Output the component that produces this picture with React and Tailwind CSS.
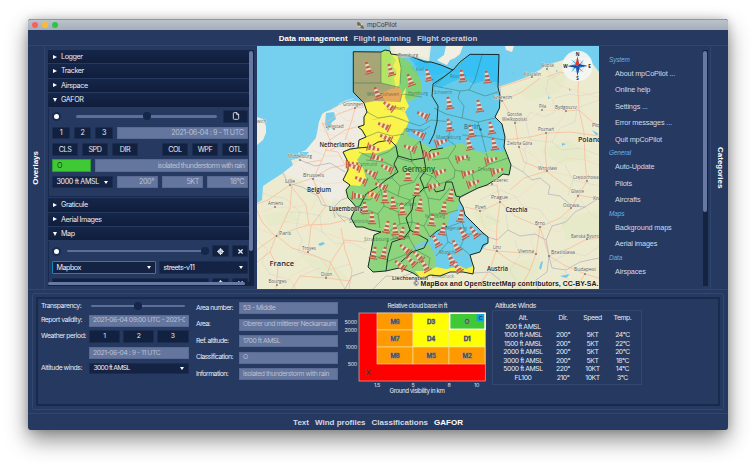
import React from "react";
import { File, LocateFixed } from "lucide-react";
import { FaTimes } from "react-icons/fa";

const Button = ({ className = "", children }) => (
  <div className={"flex h-full shrink-0 items-center justify-center rounded-[1px] border border-[#1b2c51] bg-[#12213f] text-[#e6eaf2] " + className}>{children}</div>
);

const Field = ({ className = "", children }) => (
  <div className={"flex h-full min-w-0 items-center overflow-hidden whitespace-nowrap border border-[#596b95] bg-[#64759e] text-[#b8c0d2] " + className}>{children}</div>
);

const Select = ({ className = "", children }) => (
  <div className={"flex h-full shrink-0 items-center justify-between rounded-[1px] border bg-[#142344] pl-[3.5px] pr-[4px] text-[#eef1f7] " + className}>
    <span>{children}</span>
    <span className="h-0 w-0 border-x-[2.5px] border-t-[3px] border-x-transparent border-t-white" />
  </div>
);

const Slider = ({ className = "", end = false }) => (
  <div className={"relative flex shrink-0 items-center " + className}>
    <div className="h-[2.4px] w-full rounded-full bg-[#5c6f9a]" />
    <div className={"absolute h-[8px] w-[8px] rounded-full bg-[#14264a] " + (end ? "-right-[4px]" : "left-[calc(50%-4px)]")} />
  </div>
);

const Radio = () => (
  <div className="flex h-[9px] w-[9px] shrink-0 items-center justify-center rounded-full bg-[#182b52]">
    <div className="h-[5px] w-[5px] rounded-full bg-white" />
  </div>
);

const Section = ({ open, children }) => (
  <div className="mb-px flex h-[13.4px] shrink-0 items-center bg-gradient-to-b from-[#15264a] to-[#101e3c] pl-[5px] text-[#e8ecf4]">
    <span className="flex w-[8px] items-center">
      {open ? (
        <span className="h-0 w-0 border-x-[2.5px] border-t-[4px] border-x-transparent border-t-white" />
      ) : (
        <span className="h-0 w-0 border-y-[2.5px] border-l-[4px] border-y-transparent border-l-white" />
      )}
    </span>
    {children}
  </div>
);

const Row = ({ className = "", children }) => <div className={"flex h-[12.6px] shrink-0 items-center " + className}>{children}</div>;

function Overlays() {
  return (
    <div className="flex w-[213px] shrink-0 border-l border-[#31466f] pl-[3px] pt-[4px] text-[7.2px] leading-none tracking-[-0.42px]">
      <div className="flex h-[236px] w-[201px] flex-col">
        <div className="flex h-[232px] flex-col overflow-hidden">
          <Section>Logger</Section>
          <Section>Tracker</Section>
          <Section>Airspace</Section>
          <Section open>GAFOR</Section>
          <div className="mb-px flex h-[89.6px] shrink-0 flex-col gap-[3.8px] border-b border-l border-[#182a50] pl-[3px] pr-px pt-[2.6px]">
            <Row>
              <Radio />
              <Slider className="ml-[15px] h-full w-[141px]" />
              <Button className="ml-[6px] w-[25px]"><File size={8} strokeWidth={2.6} /></Button>
            </Row>
            <Row className="gap-[4px]">
              <Button className="w-[18px]">1</Button>
              <Button className="w-[17px]">2</Button>
              <Button className="w-[18px]">3</Button>
              <Field className="flex-1 justify-end pr-[3.5px]">2021-06-04 : 9 - 11 UTC</Field>
            </Row>
            <Row className="gap-[4px]">
              <Button className="w-[26px]">CLS</Button>
              <Button className="w-[26px]">SPD</Button>
              <Button className="w-[26px]">DIR</Button>
              <Button className="ml-auto w-[26px]">COL</Button>
              <Button className="w-[26px]">WPF</Button>
              <Button className="w-[26px]">OTL</Button>
            </Row>
            <Row className="gap-[4px]">
              <div className="flex h-full w-[39px] items-center border border-[#2f9c38] bg-[#3fca35] pl-[4px] text-[#153a20]">O</div>
              <Field className="flex-1 justify-end pr-[2.5px] tracking-[-0.6px]">isolated thunderstorm with rain</Field>
            </Row>
            <Row className="gap-[4px]">
              <Select className="w-[61px] border-[#1b2c51] tracking-[-0.38px]">3000 ft AMSL</Select>
              <Field className="flex-1 justify-end pr-[3px]">200°</Field>
              <Field className="flex-1 justify-end pr-[3px]">5KT</Field>
              <Field className="flex-1 justify-end pr-[3px]">18°C</Field>
            </Row>
          </div>
          <Section>Graticule</Section>
          <Section>Aerial Images</Section>
          <Section open>Map</Section>
          <div className="flex flex-col gap-[3.8px] border-l border-[#182a50] pl-[3px] pr-px pt-[3.4px]">
            <Row>
              <Radio />
              <Slider end className="ml-[6px] h-full w-[138px]" />
              <Button className="ml-auto w-[17px]"><LocateFixed size={7} strokeWidth={3.6} /></Button>
              <Button className="ml-[3px] w-[16px]"><FaTimes size={7} /></Button>
            </Row>
            <Row className="gap-[3px]">
              <Select className="w-[104px] border-[#1587b5] tracking-[-0.5px]">Mapbox</Select>
              <Select className="w-[89px] border-[#1b2c51] tracking-[-0.5px]">streets-v11</Select>
            </Row>
            <Row className="gap-[3px]">
              <Button className="w-[157px]" />
              <Button className="w-[17px]"><LocateFixed size={7} strokeWidth={3.6} /></Button>
              <Button className="w-[16px]"><FaTimes size={7} /></Button>
            </Row>
          </div>
        </div>
        <div className="h-[3.6px] bg-[#14233f]">
          <div className="h-[3.2px] w-[197px] rounded-full bg-[#6779a3]" />
        </div>
      </div>
      <div className="h-[236px] w-[4.5px] bg-[#14233f]">
        <div className="mt-px h-[200px] w-[3.6px] rounded-full bg-[#6779a3]" />
      </div>
    </div>
  );
}

const SOCKS = [
  [368, 68, -16], [390.5, 70, -16], [410, 80, -20], [428, 75, -14], [377, 93, -20], [389, 106, -55], [423, 115, -65], [384, 126, -65], [386, 138, -65], [419, 134, -65],
  [373, 148, 105], [410, 148, -70], [377, 158, 110], [352, 164, 90], [429, 155, 100],
  [462, 76, -8], [487, 77, -8], [449, 103, -10], [479, 106, -10], [449, 125, -10], [471, 131, -10], [491, 128, -10], [441, 142, 72], [469, 144, -12], [494, 144, -10],
  [433, 155, 75], [462, 158, 75], [491, 160, 75], [355, 167, -70], [371, 173, -65], [387, 168, -65], [361, 180, -65], [381, 186, -65], [408, 175, 0], [358, 196, 95],
  [373, 195, -65], [385, 197, 0], [417, 190, 6], [393, 203, -5], [365, 208, -5], [402, 209, -5], [420, 205, 8], [372, 218, 0], [387, 227, 10], [395, 229, -5],
  [417, 229, 8], [402, 233, 12], [374, 253, 12], [384, 253, 12], [405, 249, -50], [418, 256, -45], [400, 265, -50], [411, 261, -45], [425, 266, -30],
  [440, 172, 72], [434, 186, 75], [468, 173, 75], [497, 171, 75], [473, 183, 72], [451, 195, 10], [444, 208, 8], [432, 220, 5], [461, 216, 8], [443, 229, 10],
  [463, 233, -30], [474, 232, -35], [436, 241, -30], [456, 246, -28], [451, 259, -25], [457, 267, -35],
];

const CITIES = [
  ["wich", 257, 123, 9], ["Groningen", 343, 105.5, 20], ["Lelystad", 325.5, 127.5, 18], ["Middelburg", 288, 157.5, 24], ["Brussels", 303, 176.5, 21], ["Lille", 285, 183, 10],
  ["Amiens", 268, 204.5, 15], ["Paris", 279, 234.5, 12], ["Troyes", 302, 249.5, 14], ["Dijon", 321, 276, 11], ["Bourges", 268.5, 283, 18], ["Słupsk", 541, 67, 13],
  ["Koszalin", 524, 75.5, 17], ["Szczecin", 493, 99, 19], ["Gorzów", 507, 115.5, 15], ["Wielkopolski", 502, 121, 25], ["Piła", 539, 108, 7], ["Bydgoszcz", 555, 109, 22],
  ["Poznań", 538, 130.5, 16], ["Zielona Góra", 507, 145, 25], ["Płock", 592, 126.5, 13], ["Wrocław", 538, 169.5, 19], ["Częstochowa", 573, 178.5, 25.5], ["Gliwice", 571, 193, 13],
  ["Prague", 491, 199, 17], ["Plzeň", 475, 209, 11], ["Ostrava", 563, 206.5, 16], ["Kraków", 593, 199.5, 17], ["Liberec", 493, 182, 15], ["Brno", 535, 224.5, 10],
  ["Linz", 493, 248.5, 8], ["Vienna", 518, 252.5, 16], ["Bratislava", 551, 254, 24], ["Banská Bystrica", 571, 237.5, 31], ["Budapest", 574, 271, 22], ["Flensburg", 398, 57, 20],
];

const GHOSTS = [
  ["Wilhelmshaven", 367, 96, 32], ["Bremen", 387, 110, 18], ["Hamburg", 408, 95, 20], ["Kiel", 416, 71, 8], ["Rostock", 450, 78, 16], ["Schwerin", 434, 93.5, 18],
  ["Hannover", 404, 131.5, 19], ["Magdeburg", 436, 138.5, 25], ["Leipzig", 455, 159.5, 15], ["Dresden", 478, 170.5, 17], ["Frankfurt", 394, 205.5, 22], ["Dortmund", 357, 165.5, 20],
  ["Saarbrücken", 349, 223, 24], ["Strasbourg", 364, 241, 25], ["Nuremberg", 425, 217.5, 20], ["Regensburg", 445, 229.5, 22], ["Munich", 439, 253.5, 16], ["Innsbruck", 432, 277.5, 22], ["Stuttgart", 392, 239, 18],
];

const DOTS = [[355, 108], [334, 129], [300, 160], [313, 179], [290, 185], [275, 207], [276.5, 236], [308, 252], [326, 278], [277, 285], [547, 69], [532, 77], [502, 101], [515, 123], [542, 110], [566, 111], [546, 133], [519, 147], [547, 171], [587, 181], [578, 196], [500, 202], [480, 211], [571, 208], [540, 227], [497, 251], [536, 254], [549, 256], [587, 239], [585, 274], [492, 184]];

const GERMANY = "M353.3 51.7L381 52L385 50L390 51L391 54L398 55L407 55L415 58L425 62L431 62L441 65L453 70L460 62L470 54.3L499 54.5L498 87L500 96L499.5 108L495 117L502 124L505 137L504 147L508 157L511 165L509 175L503 174L498 178L487 185L478 188L470 192L460 197L459 200L463 207L465 215L475 225L483 233L488 237L488 243L483 245L480 252L470 255L472 262L474 268L473 274L463 272L450 272L440 276L430 275L422 279L413 273L406 270L399 268L386 271L373 272L368 267L371 252L374 235L381 232L371 230L363 227L356 227L351 218L356 207L352 202L348 198L346 190L350 185L343 180L348 170L348 162L343 152L350 149L358 148L359 140L366 137L362 130L358 127L364 125L364 117L367 112L364 103L356 95L353.3 92Z";

function Compass() {
  return (
    <g transform="translate(577.5 66)">
      <circle r="15.2" fill="#f4f6f5" opacity="0.92" />
      <circle r="6" fill="none" stroke="#9db9d6" strokeWidth="0.5" />
      <g fill="#2fb4de">
        <path d="M0 0L-6.5 -6.5L-1 -3ZM0 0L6.5 -6.5L3 -1Z" />
        <path d="M0 0L6.5 6.5L1 3ZM0 0L-6.5 6.5L-3 1Z" />
      </g>
      <path d="M0 -10L1.8 -1.8L0 0L-1.8 -1.8Z" fill="#e23327" />
      <path d="M0 10L-1.8 1.8L0 0L1.8 1.8ZM10 0L1.8 1.8L0 0L1.8 -1.8ZM-10 0L-1.8 -1.8L0 0L-1.8 1.8Z" fill="#2e63c2" />
      <path d="M0 10L1.8 1.8L0 0ZM10 0L1.8 -1.8L0 0ZM-10 0L-1.8 1.8L0 0Z" fill="#1d4596" />
      <g fontSize="4.6" fontWeight="700" textAnchor="middle" fill="#222">
        <text y="-10.4">N</text><text y="14">S</text><text x="12" y="1.7">E</text><text x="-12" y="1.7">W</text>
      </g>
    </g>
  );
}

function MapView() {
  return (
    <svg className="block h-[243px] w-[342px] shrink-0 self-start font-['Open_Sans',sans-serif]" viewBox="257 46 342 243">
      <rect x="257" y="46" width="342" height="243" fill="#75cfef" />
      <path d="M257 117L263 119L266 126L266 133L263 140L257 145Z" fill="#f0ede2" />
      <path d="M257 203L262 200L263 186L272 180L283 173L293 165L291 160L300 158L298 153L306 150L311 144L316 138L318 131L319 122L322 114L325 112L329 117L332 109L339 105L346 102L353 101L363 102L375 92L391 88L392 70L390 46L431 46L429 62L455 72L480 80L498 87L513 82L530 76L547 65L563 60L572 57L588 58L599 72V289H257Z" fill="#edebcf" />
      <path d="M300 160L306 150L316 138L319 122L325 112L353 101L364 103L360 150L345 160L345 190L340 205L320 196L300 180L283 173Z" fill="#efece3" />
      <path d="M437 60L444 55L446 46H463L460 54L455 58L450 60L447 65L440 62ZM505 46L514 46L512 52L506 50ZM393 46H430L428 58L415 55L408 58L397 54Z" fill="#f1eee2" />
      <path d="M326 113L334 112L336 119L332 122L328 131L325 124ZM300 152L309 152L306 156L299 156ZM410 68L420 60L440 66L450 72L430 76L418 76Z" fill="#75cfef" />
      <path d="M338 104L346 100L354 98L353 99.5L344 102L339 105Z" fill="#b9deea" />
      <g fill="#dfe9c4" opacity="0.5">
        <path d="M515 90L545 76L570 70L560 92L530 100ZM480 205L500 222L485 228L472 214ZM540 150L570 140L590 158L560 164ZM300 255L330 262L350 280L320 276ZM500 265L540 258L536 289H480ZM560 218L599 210V236L566 240ZM262 215L290 210L300 220L270 226ZM334 198L350 206L347 220L330 214Z" />
      </g>
      <g fill="none" stroke="#f9b996" strokeWidth="0.75">
        <path d="M275 236L262 222L257 210M276 236L270 252L278 268L276 289M277 236L298 228L309 225L330 224L350 219M277 236L290 208L292 185L313 178L330 168L345 165M277 236L292 248L308 253L330 262L345 289M309 225L306 205L290 185L268 200L257 204M276 236L262 246L257 250M308 253L311 226L326 206L313 179L322 160L330 140L322 122M330 140L345 130L360 126M330 150L350 142M322 160L305 163M322 125L338 114L355 108L364 107M355 108L352 120L345 140M345 165L338 152L325 150M326 278L331 262L345 240L366 242M257 262L270 252M292 289L300 276L326 278L350 281M341 228L345 250L352 270L349 289" />
        <path d="M502 100L515 123L519 147L524 162L546 171L578 195L599 199M505 140L530 137L547 133L570 132L599 136M547 133L545 150L547 171M581 60L578 90L579 110L584 132L585 160L587 181L578 196L571 208L560 218L540 227L549 256M547 77L560 72L577 76M500 202L482 211L465 207M500 202L497 185L485 186M500 202L515 216L540 227L536 254L510 252L496 251L480 248M500 202L497 225L496 251L490 270L476 289M536 254L530 270L520 289M549 256L566 266L585 274L599 278M549 256L570 248L585 240L599 238M502 101L522 92L540 78M498 88L510 84L532 77M547 171L524 178L510 190M566 111L579 110L599 128M585 274L575 289M496 251L512 262L530 270" />
      </g>
      <g fill="none" stroke="#f7cdb2" strokeWidth="0.4">
        <path d="M257 228L276 236L284 222L309 225L322 232L345 240M262 212L275 207L290 208L306 205M270 262L292 264L308 252M300 166L313 179L318 196L311 210M313 179L326 184L345 182M320 130L334 136L345 133L352 146M312 150L326 156L340 156M332 106L345 120L355 122M282 289L291 276L311 266M515 123L530 120L542 110L566 111M519 147L534 156L547 171L566 175L587 181M547 133L560 122L566 111M500 202L520 196L534 184L547 171M480 211L484 228L497 232M540 227L560 232L571 208M536 254L530 240L540 227M578 196L590 214L599 218M566 266L562 280M502 270L486 276M599 165L585 160L566 158L547 171M599 98L580 92L560 86L547 69" />
      </g>
      <g fill="none" stroke="#b9b4bf" strokeWidth="0.8">
        <path d="M283 173L288 183L302 187L318 196L322 205L333 207L338 215L351 219M300 160L315 166L330 163L345 172M338 215L345 222M335 218L333 208L341 200L347 198M511 165L523 172L532 180L540 178L550 186L548 194L560 196L572 206L585 207L599 198M460 198L470 192M488 237L497 240L508 230L520 236L535 234L546 240L552 226L566 222L575 212L585 207M546 240L549 256L552 268L566 270L580 262L599 258M549 256L547 272L536 280L538 289M500 87L501 101M413 273L400 277L386 276L373 289M474 273L490 272L500 280M364 272L352 276L345 289" />
      </g>
      <g fill="none" stroke="#c9c4c6" strokeWidth="0.5" strokeDasharray="1.5 0.7">
        <path d="M257 190L270 196L285 198L300 212L296 228L302 240L298 252L320 258L330 270L350 264M257 240L268 250L262 262L270 274M320 216L322 232L336 244L350 242L366 250M290 212L300 212L322 216M300 276L320 268M270 274L290 280L296 289M523 172L527 160L524 150L530 140L526 120L530 112L545 117L555 112L553 100L546 92L548 80L560 74M530 140L552 142L560 128L575 122L577 108L599 100M555 98L570 94L580 96L599 92M552 142L562 150L580 148L599 155M565 165L573 180L568 196M573 180L599 186M480 200L500 190L515 196L523 206L540 210L552 226M500 222L486 216M508 230L506 214M515 240L520 256L510 270L520 289M552 262L570 252L585 256L599 246M566 270L570 289" />
      </g>
      <g fill="#72c7ec">
        <path d="M318 244L323 242L325 244L320 246ZM541 262L543 261L541 270L539 268ZM562 143L566 144L562 146ZM440 62L441 64L439 64ZM592 130L599 134L596 135ZM548 96L550 98L548 99ZM512 72L515 73L513 75ZM556 70L558 71L556 72ZM569 88L571 90L569 91Z" />
        <path d="M560 276L570 274L574 270L566 278Z" />
      </g>
      <g opacity="0.92">
        <path d={GERMANY} fill="#84d377" />
        <path d="M353.3 51.7H381V83L400 87V102L375 101L367 112L364 103L353.3 92Z" fill="#aba36c" />
        <path d="M391 89L400 88L402 94L400 102L385 101L381 94Z" fill="#e7a352" />
        <path d="M381 52L385 50L390 51L391 54L398 55L400 82L398 87L381 83Z" fill="#b9e85a" />
        <path d="M391 54L398 55L401 68L400 84L396 88L394 78L397 72L393 66L396 60Z" fill="#f2f04b" />
        <path d="M398 55L407 55L415 58L431 62L453 70L470 54.3L499 54.5L498 87L500 96L499.5 108L495 117L502 124L505 137L504 152L490 150L484 153L473 150L462 143L453 145L443 148L431 148L418 140L408 136L406 128L409 121L405 110L408 102L416 98L422 92L421 82L417 73L409 62Z" fill="#5cc8ee" />
        <path d="M407 55L431 62L453 70L470 54.3L499 54.5V83L487 80L474 84L462 78L452 82L440 88L433 84L428 70L416 66Z" fill="#33bff5" />
        <path d="M398 55L409 62L417 73L421 82L422 92L416 98L408 99L402 94L400 82L401 68Z" fill="#79d06f" />
        <path d="M367 112L364 103L375 101L400 102L402 94L406 88L405 98L409 106L405 112L409 121L406 128L401 134L397 143L390 149L378 153L362 153L357 160L363 168L366 178L360 186L350 185L343 180L348 170V162L343 152L358 148L359 140L366 137L358 127L364 125V117Z" fill="#fbf342" />
        <path d="M460 200L463 207L465 215L475 225L488 237V243L480 252L470 255L473 268L450 269L437 271L435 256L430 245V237L437 231L447 226L450 214L457 210Z" fill="#63cbef" />
        <path d="M415 271L428 271L436 267L446 269L460 266L466 269L473 266L474 274L463 272L450 272L440 276L430 275L422 279Z" fill="#f9ef3d" />
        <circle cx="371" cy="194" r="4" fill="#f1b53a" />
        <path d="M412 247L420 243L431 240L428 244L416 249Z" fill="#69c6ee" />
      </g>
      <g fill="none" stroke="#b8c46a" strokeWidth="0.5" opacity="0.8">
        <path d="M372 120L390 116L404 120M370 150L384 160L400 170L393 204L382 240M393 204L420 216L440 252M393 204L372 215M420 216L437 190L462 160L470 130M440 252L426 262M440 252L470 256M393 204L408 240L438 252M404 130L408 165L396 200M462 160L497 170M362 180L385 190L393 204M384 110L390 105L405 112" />
      </g>
      <g fill="none" stroke="#2e6b4a" strokeWidth="0.5" opacity="0.85">
        <path d="M381 52V83M353.3 83L381 83L398 87M400 102L402 94L422 97M398 55L401 68L400 84M367 112L378 118L392 116L408 122M366 137L378 132L392 136L404 134M359 152L372 158L388 152L396 146M408 122L420 126L431 120L452 122M406 128L420 133L430 126M452 70L434 86L460 91L469 90L475 80L482 55M469 90L485 96L498 92M434 108L446 114L462 118L464 106L458 98L460 91M462 118L478 122L495 118M452 122L448 140L456 146M478 122L482 136L486 152M462 135L482 136L504 140M456 146L448 158L455 170L472 174L490 164L508 158M448 158L432 160M472 174L476 188M490 164L486 153M396 146L398 158L412 162L410 150L420 141M366 172L378 180L392 178L397 168L384 162L366 160M378 180L381 190L370 200L350 198M392 178L400 186L398 196L386 190M400 186L414 182L420 172L412 162M420 172L432 176L440 184L454 178L455 170M398 196L410 200L424 190L432 176M356 207L368 210L378 214L384 206L381 190M378 214L380 228M384 206L398 212L410 200M398 212L400 224L386 234M400 224L412 222L410 200M412 222L424 226L430 214L428 198L424 190M428 198L440 200L450 188M430 214L444 214L458 210M412 222L408 236L390 240M424 226L430 237M388 240L384 258L372 256M408 236L416 250L402 256L386 262M416 250L430 258L428 270M445 228L448 242L436 256M448 242L462 248L470 255M445 228L462 222L466 234L460 248M466 234L484 234M448 256L455 268" />
      </g>
      <path d={GERMANY} fill="none" stroke="#162a2b" strokeWidth="1" strokeLinejoin="round" />
      <g fill="none" stroke="#1b3026" strokeWidth="0.95" strokeLinejoin="round">
        <path d="M453 70L445 76L433 84L432 96L438 106L437 122L434 134L429 144M358 148L370 147L378 142L390 140L396 146M396 146L398 156L394 164L398 172L386 180L376 188L366 194L360 206L352 208M398 156L412 160L424 158L431 150M420 141L424 158M431 150L443 148M424 158L426 170L420 178L424 188L432 186L436 192L444 190L446 182L452 182L456 196L460 197M424 188L414 198L412 210L406 218L410 230L404 238L392 242L388 256L386 271M410 230L428 240L424 248L412 252L401 262M430 237L437 231L447 226" />
      </g>
      <g fontSize="5.6" fill="#264d43" opacity="0.6">
        {GHOSTS.map(([t, x, y, w]) => <text key={t} x={x} y={y} textLength={w} lengthAdjust="spacingAndGlyphs">{t}</text>)}
      </g>
      <g fontSize="5.8" fill="#565b62" stroke="#f5f2e2" strokeWidth="0.6" style={{ paintOrder: "stroke" }}>
        {CITIES.map(([t, x, y, w]) => <text key={t} x={x} y={y} textLength={w} lengthAdjust="spacingAndGlyphs">{t}</text>)}
      </g>
      <g fill="#3a3d42">{DOTS.map(([x, y]) => <circle key={x + "-" + y} cx={x} cy={y} r="0.8" />)}</g>
      <text x="464" y="128.5" fontSize="6.4" fill="#1b5f86" textLength="16" lengthAdjust="spacingAndGlyphs">Berlin</text>
      <circle cx="480.5" cy="129.5" r="1.2" fill="#1b5f86" />
      <g fontSize="6.8" fontWeight="600" fill="#222529" stroke="#f5f2e2" strokeWidth="0.6" style={{ paintOrder: "stroke" }}>
        <text x="319.5" y="146.5" textLength="35" lengthAdjust="spacingAndGlyphs">Netherlands</text>
        <text x="307" y="191.7" textLength="24" lengthAdjust="spacingAndGlyphs">Belgium</text>
        <text x="329" y="211.2" textLength="34" lengthAdjust="spacingAndGlyphs">Luxembourg</text>
        <text x="269.5" y="265.5" fontSize="7.6" textLength="24.5" lengthAdjust="spacingAndGlyphs">France</text>
        <text x="505.5" y="211.8" textLength="22" lengthAdjust="spacingAndGlyphs">Czechia</text>
        <text x="487" y="271.3" textLength="21" lengthAdjust="spacingAndGlyphs">Austria</text>
        <text x="578" y="141.7" fontSize="7.6" textLength="23.5" lengthAdjust="spacingAndGlyphs">Poland</text>
        <text x="392" y="279.6" fontSize="5.6" textLength="36" lengthAdjust="spacingAndGlyphs">Liechtenstein</text>
      </g>
      {SOCKS.map(([x, y, r]) => (
        <g key={x + "," + y} transform={`translate(${x} ${y}) rotate(${r})`} opacity="0.85">
          <path d="M-1.3 -6.4L1.3 -6.4L3.2 5.6H-3.2Z" fill="#f1e2d2" />
          <path d="M-1.3 -6.4H1.3L1.7 -4.2H-1.7ZM-2 -2H2L2.3 0.2H-2.3ZM-2.6 2.2H2.6L3 4.4H-3ZM-4.2 4.9H4.2V6.2H-4.2Z" fill="#c4503a" />
        </g>
      ))}
      <text x="402" y="171.8" fontSize="8.4" fontWeight="600" fill="#1f6a35" textLength="33" lengthAdjust="spacingAndGlyphs">Germany</text>
      <Compass />
      <text x="413.5" y="285.8" fontSize="7" fontWeight="700" fill="#17191c" stroke="#f5f2e2" strokeWidth="0.8" style={{ paintOrder: "stroke" }} textLength="185" className="font-['Liberation_Sans',sans-serif]">© MapBox and OpenStreetMap contributors, CC-BY-SA.</text>
    </svg>
  );
}

const MENU = [
  ["System", ["About mpCoPilot ...", "Online help", "Settings ...", "Error messages ...", "Quit mpCoPilot"]],
  ["General", ["Auto-Update", "Pilots", "Aircrafts"]],
  ["Maps", ["Background maps", "Aerial images"]],
  ["Data", ["Airspaces", "NOTAMs"]],
];

function Categories() {
  return (
    <div className="flex w-[112px] shrink-0 border-r border-[#31466f] font-['Liberation_Sans',sans-serif] leading-none">
      <div className="h-[238.5px] w-[104px] overflow-hidden pl-[10px] pt-[8.4px]">
        {MENU.map(([head, items]) => (
          <div key={head}>
            <div className="flex h-[11px] items-center text-[6.4px] italic tracking-[-0.1px] text-[#6db3e2]">{head}</div>
            {items.map((i) => (
              <div key={i} className="flex h-[16.5px] items-center pl-[6px] text-[7.3px] tracking-[-0.15px] text-[#d3d9e6]">{i}</div>
            ))}
          </div>
        ))}
      </div>
      <div className="mt-[4px] h-[236px] w-[4.5px] bg-[#14233f]">
        <div className="mt-px h-[161px] w-[3.6px] rounded-full bg-[#6779a3]" />
      </div>
    </div>
  );
}

const CELLS = [
  ["M6", 377, 313, "#ff9900"], ["D3", 413, 313, "#ffff00"], ["O", 449, 313, "#3fca35"],
  ["M7", 377, 330, "#ff9900"], ["D4", 413, 330, "#ffff00"], ["D1", 449, 330, "#ffff00"],
  ["M8", 377, 347, "#ff9900"], ["M5", 413, 347, "#ff9900"], ["M2", 449, 347, "#ff9900"],
];

function CloudChart() {
  return (
    <svg className="block h-[98px] w-[148px] shrink-0" viewBox="340 298 148 98">
      <g fill="#e8ecf4" fontSize="6.2">
        <text x="387.5" y="307" textLength="59.5">Relative cloud base in ft</text>
        <text x="389.5" y="391.8" textLength="55">Ground visibility in km</text>
      </g>
      <rect x="359" y="312" width="126.3" height="68" fill="#ff0000" stroke="#e9a9a9" strokeWidth="0.7" />
      {CELLS.map(([t, x, y, c]) => (
        <g key={t}>
          <rect x={x} y={y - 1} width="36" height="17" fill={c} stroke="#f2e6a8" strokeWidth="0.6" />
          <text x={x + 18} y={y + 9.8} textAnchor="middle" fontSize="6.2" letterSpacing="-0.2" fontWeight="500" fill="#3b4149" stroke="#8b8f8b" strokeWidth="0.9" style={{ paintOrder: "stroke" }}>{t}</text>
        </g>
      ))}
      <text x="368" y="373.7" textAnchor="middle" fontSize="6.2" fontWeight="500" fill="#4b2020" stroke="#b03a30" strokeWidth="0.7" style={{ paintOrder: "stroke" }}>X</text>
      <rect x="449.7" y="312.3" width="35.4" height="16" fill="none" stroke="#fff" strokeWidth="1.4" />
      <rect x="476.6" y="313" width="7.4" height="7.4" fill="#14a0e6" />
      <text x="480.5" y="318.8" textAnchor="middle" fontSize="5.4" fontWeight="600" fill="#21405a">C</text>
      <g fill="#dfe4ee" fontSize="5.4" letterSpacing="-0.25">
        <g textAnchor="end">
          <text x="357" y="322.6">5000</text><text x="357" y="331">2000</text><text x="357" y="348">1000</text><text x="357" y="365">500</text>
        </g>
        <g textAnchor="middle">
          <text x="377" y="385.8">1.5</text><text x="413" y="385.8">5</text><text x="449" y="385.8">8</text><text x="476.5" y="385.8">10</text>
        </g>
      </g>
    </svg>
  );
}

const WINDS = [
  ["Alt.", "Dir.", "Speed", "Temp."], ["500 ft AMSL", "", "", ""], ["1000 ft AMSL", "200°", "5KT", "24°C"], ["1500 ft AMSL", "200°", "5KT", "22°C"],
  ["2000 ft AMSL", "200°", "5KT", "20°C"], ["3000 ft AMSL", "200°", "5KT", "18°C"], ["5000 ft AMSL", "220°", "10KT", "14°C"], ["FL100", "210°", "10KT", "3°C"],
];

const AREA = [
  ["Area number:", "53 - Middle"], ["Area:", "Oberer und mittlerer Neckarraum"], ["Ref. altitude:", "1700 ft AMSL"], ["Classification:", "O"], ["Information:", "isolated thunderstorm with rain"],
];

function Details() {
  return (
    <div className="h-[124px] shrink-0 border-t border-[#31466f] px-[4px] pt-[3px]">
      <div className="h-[117px] rounded-[2px] border border-[#34486f] p-[3px]">
        <div className="flex h-[109px] w-[684px] border-2 border-[#192a4c] text-[6.8px] leading-none tracking-[-0.44px] text-[#e8ecf4]">
          <div className="grid w-[151px] shrink-0 grid-cols-[48px_99.5px] grid-rows-[14px_15px_17px_16px_15px] items-center pl-[3px]">
            <span>Transparency:</span>
            <Slider className="ml-[2px] w-[94px]" />
            <span>Report validity:</span>
            <div className="h-[12px]"><Field className="pl-[3px]"><span className="w-[92px] overflow-hidden">2021-06-04 09:00 UTC - 2021-06-04</span></Field></div>
            <span>Weather period:</span>
            <div className="flex h-[12.6px] gap-[3px]">
              <Button className="w-[31px]">1</Button>
              <Button className="w-[31px]">2</Button>
              <Button className="w-[31.5px]">3</Button>
            </div>
            <span />
            <div className="h-[12px]"><Field className="pl-[3px]">2021-06-04 : 9 - 11 UTC</Field></div>
            <span>Altitude winds:</span>
            <div className="h-[11px]"><Select className="border-[#1b2c51] tracking-[-0.7px]">3000 ft AMSL</Select></div>
          </div>
          <div className="flex w-[151px] shrink-0 flex-col gap-[4.5px] pl-[7px] pt-[3px]">
            {AREA.map(([k, v]) => (
              <div key={k} className="flex h-[12px] items-center">
                <span className="w-[43px] shrink-0 tracking-[-0.54px]">{k}</span>
                <Field className="w-[99px] pl-[3px]">{v}</Field>
              </div>
            ))}
          </div>
          <CloudChart />
          <div className="ml-[4px] w-[151px] shrink-0 pt-[3.6px]">
            <div className="pl-[3px] tracking-[-0.42px]">Altitude Winds</div>
            <div className="mt-[1px] grid h-[75px] w-[150px] grid-cols-[60px_20px_39px_21px] content-start border border-[#34486f] pt-[3px] text-center">
              {WINDS.flat().map((t, i) => (
                <span key={i} className="h-[8.5px] whitespace-nowrap leading-[8.5px] tracking-[-0.42px]">{t}</span>
              ))}
            </div>
          </div>
        </div>
      </div>
    </div>
  );
}

export default function App() {
  return (
    <div className="h-[467px] w-[756px] overflow-hidden bg-white pl-[28px] pt-[19px] font-[Inter,sans-serif]">
      <div className="flex h-[411px] w-[700px] flex-col overflow-hidden rounded-[3px] bg-[#263961] shadow-[0_10px_22px_rgba(0,0,0,0.45),0_0_10px_rgba(0,0,0,0.2)]">
        <div className="flex h-[11px] shrink-0 items-center border-t border-[#8f97a3] bg-gradient-to-b from-[#bcc2cb] to-[#a6aeba] leading-none">
          <div className="flex w-[328px] items-center gap-[4px] pl-[4px]">
            <span className="h-[6px] w-[6px] rounded-full bg-[#fc605b]" />
            <span className="h-[6px] w-[6px] rounded-full bg-[#fcbb2f]" />
            <span className="h-[6px] w-[6px] rounded-full bg-[#27c840]" />
          </div>
          <svg className="h-[9px] w-[9px]" viewBox="0 0 9 9">
            <path d="M1 1.5L3 1L8 6L7.5 8L5.5 7.5L1 3.5Z" fill="#776b58" />
            <path d="M4.5 3L7.5 2L5.8 4.5ZM1.5 6L4 4.6L5 6Z" fill="#d9d2bd" />
          </svg>
          <span className="ml-[2px] text-[6.4px] tracking-[-0.15px] text-[#3b3f46]">mpCoPilot</span>
        </div>
        <div className="flex h-[15px] shrink-0 items-center justify-center gap-[6px] pt-[2px] font-['Liberation_Sans',sans-serif] text-[8px] font-bold leading-none text-[#c9d0df]">
          <span className="text-white">Data management</span>
          <span>Flight planning</span>
          <span>Flight operation</span>
        </div>
        <div className="flex h-[244px] shrink-0 border-t border-[#31466f]">
          <div className="flex w-[16px] shrink-0 items-center justify-center font-['Liberation_Sans',sans-serif] text-[8px] font-bold leading-none text-white">
            <span className="rotate-180 [writing-mode:vertical-rl]">Overlays</span>
          </div>
          <Overlays />
          <MapView />
          <Categories />
          <div className="flex flex-1 items-center justify-center font-['Liberation_Sans',sans-serif] text-[8px] font-bold leading-none text-white">
            <span className="[writing-mode:vertical-rl]">Categories</span>
          </div>
        </div>
        <Details />
        <div className="flex flex-1 items-center justify-center gap-[6px] border-t border-[#31466f] pt-px font-['Liberation_Sans',sans-serif] text-[8px] font-bold leading-none text-[#d3d9e6]">
          <span>Text</span>
          <span>Wind profiles</span>
          <span>Classifications</span>
          <span className="text-white">GAFOR</span>
        </div>
      </div>
    </div>
  );
}
